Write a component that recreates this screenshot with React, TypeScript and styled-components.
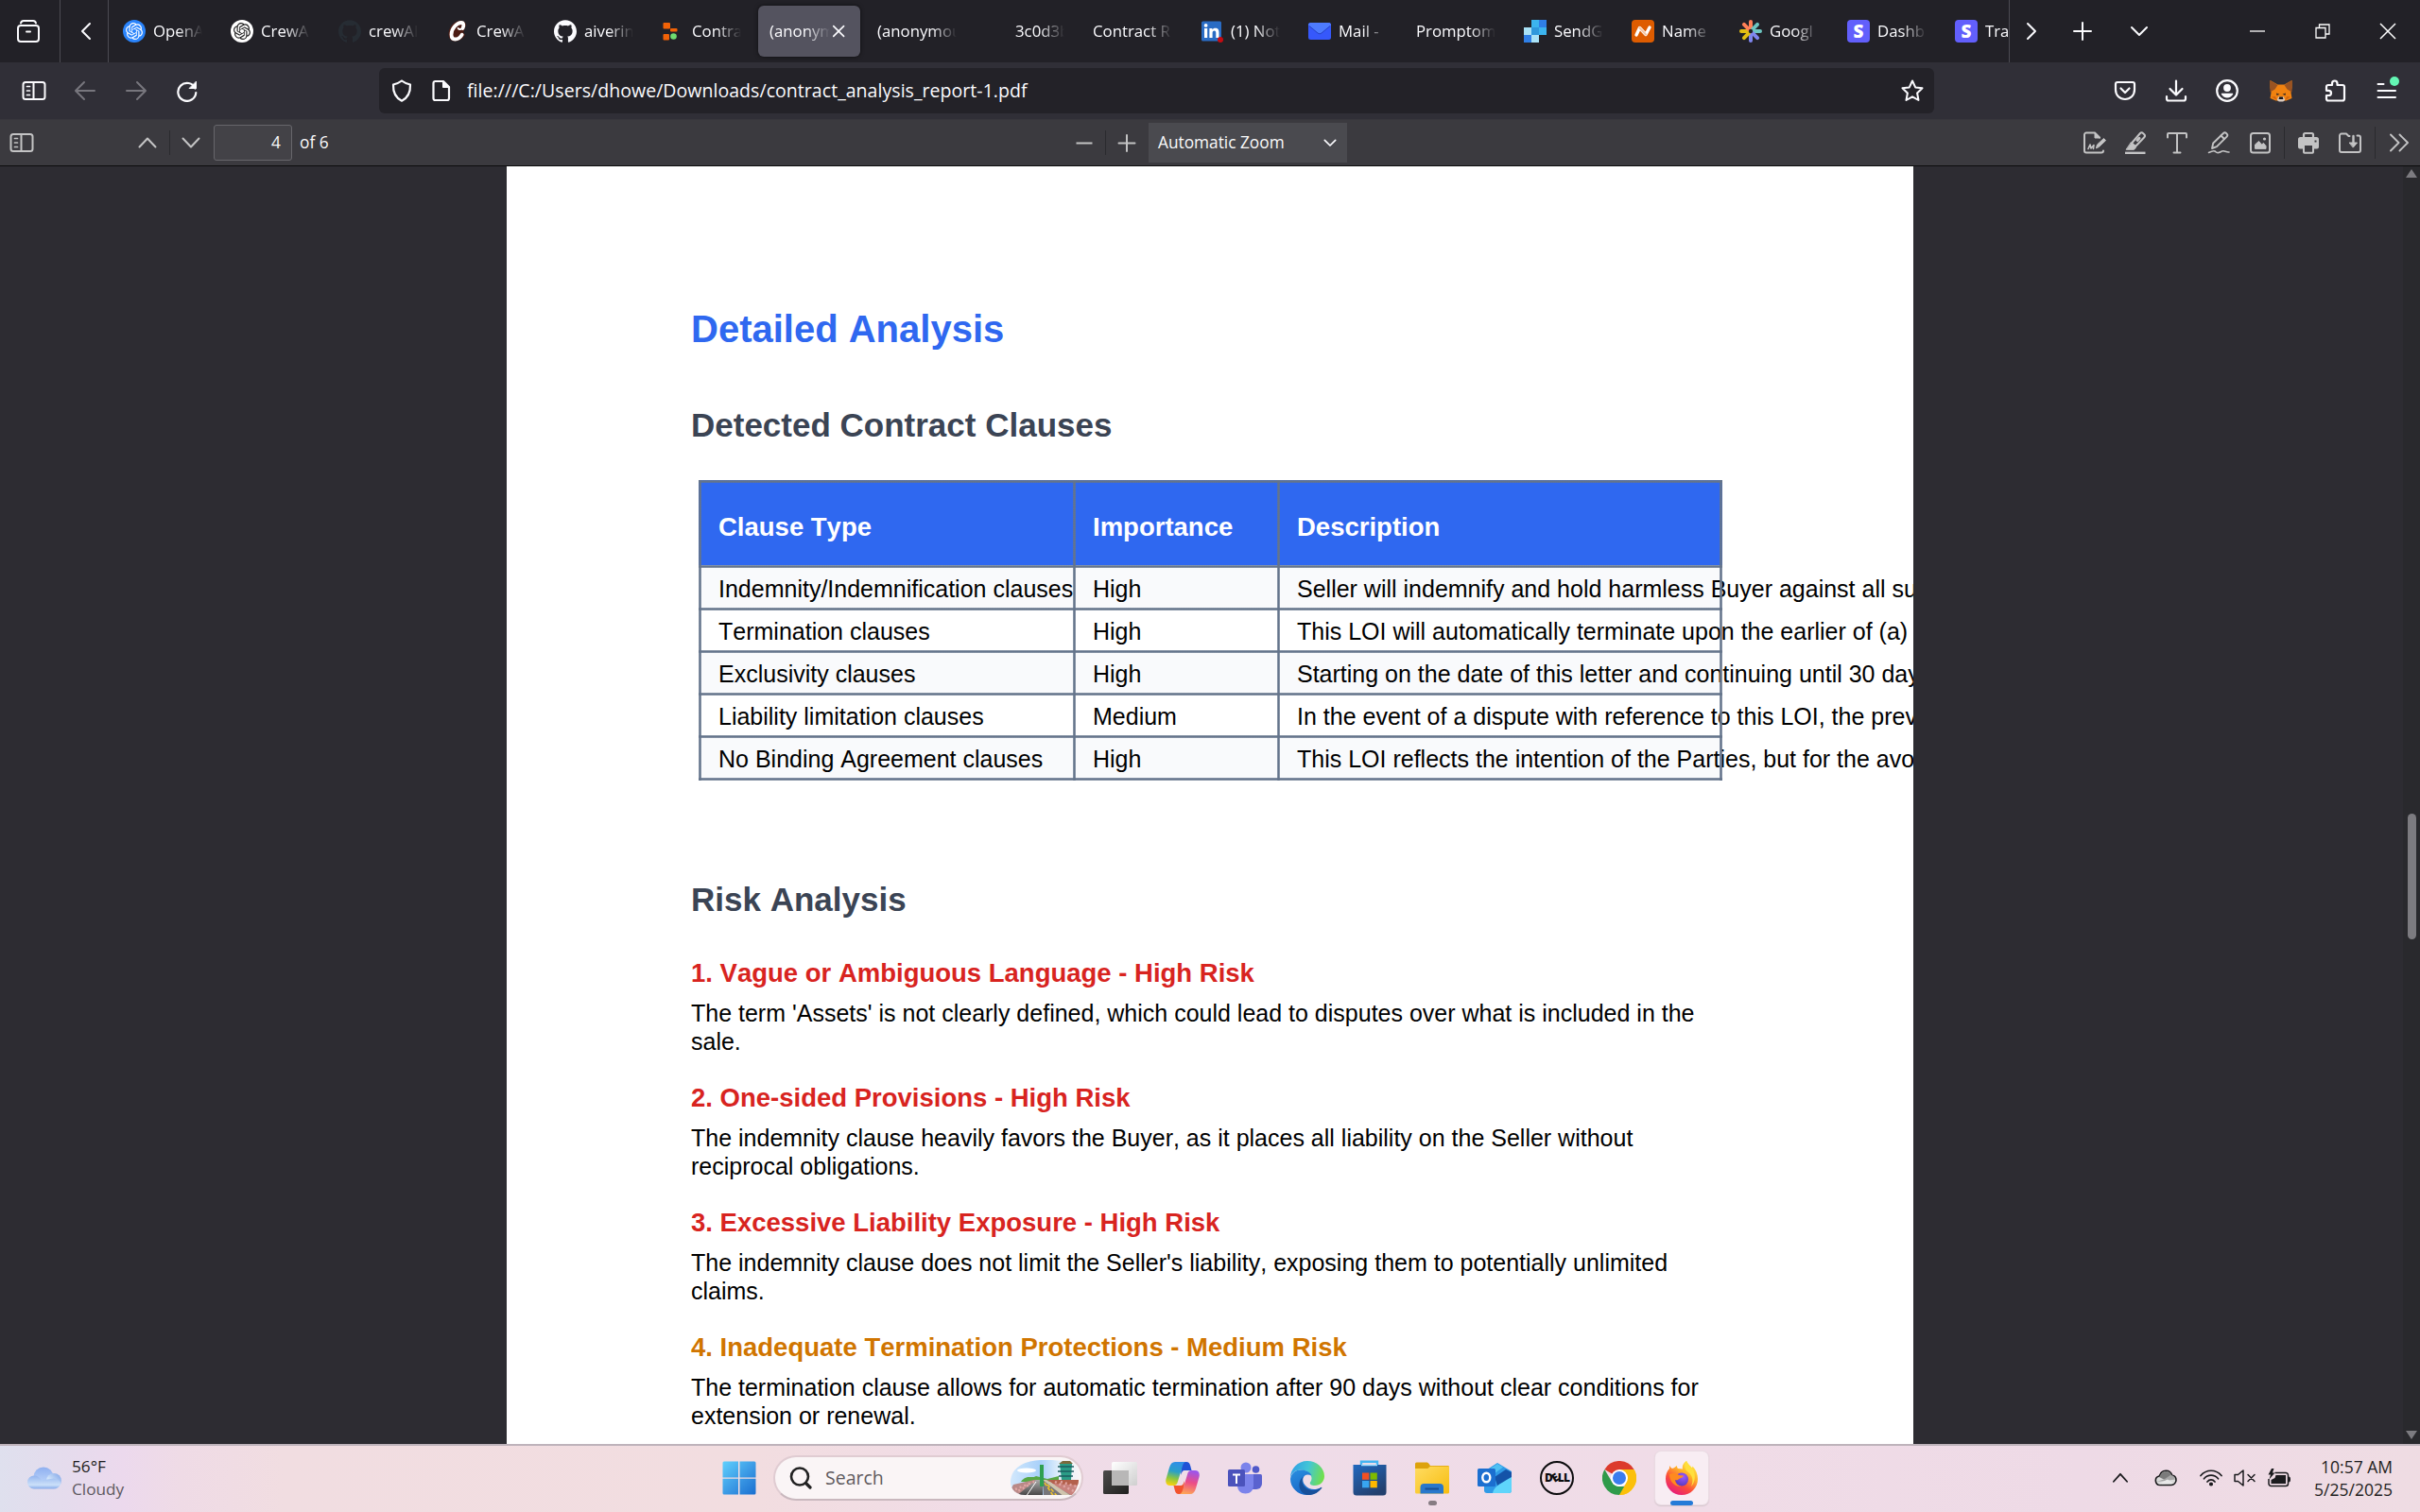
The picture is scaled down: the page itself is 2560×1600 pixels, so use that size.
import React from "react";
import styled, { createGlobalStyle, css } from "styled-components";
import { SiOpenai, SiGithub } from "react-icons/si";

const UI = `"Open Sans", "Noto Sans", sans-serif`;
const DOC = `"Liberation Sans", Arial, sans-serif`;

const Global = createGlobalStyle`
  *, *::before, *::after { box-sizing: border-box; }
  html, body { margin: 0; padding: 0; background: #2d2c32; overflow: hidden; }
  svg { display: block; flex: none; }
`;

const Screen = styled.div`
  width: 2560px;
  height: 1600px;
  display: flex;
  flex-direction: column;
  overflow: hidden;
  font-family: ${UI};
`;

/* ---------- shared ---------- */

const Bar = styled.div<{ $h: number; $bg: string }>`
  flex: none;
  height: ${(p) => p.$h}px;
  background: ${(p) => p.$bg};
  display: flex;
  align-items: center;
`;

const Slot = styled.span<{ $w?: number; $ml?: number; $c?: string }>`
  flex: none;
  width: ${(p) => p.$w ?? 24}px;
  margin-left: ${(p) => p.$ml ?? 0}px;
  color: ${(p) => p.$c ?? "#fbfbfe"};
  display: flex;
  align-items: center;
  justify-content: center;
`;

const Rule = styled.span<{ $h: number; $ml?: number; $c?: string }>`
  flex: none;
  width: 1px;
  height: ${(p) => p.$h}px;
  margin-left: ${(p) => p.$ml ?? 0}px;
  background: ${(p) => p.$c ?? "#2a2a2e"};
`;

const Spacer = styled.span`
  flex: 1;
`;

type GlyphProps = { s?: number; w?: number; children: React.ReactNode };
const Line = ({ s = 24, w = 2, children }: GlyphProps) => (
  <svg width={s} height={s} viewBox="0 0 24 24" fill="none" stroke="currentColor" strokeWidth={w} strokeLinecap="round" strokeLinejoin="round">
    {children}
  </svg>
);

/* ---------- tab strip ---------- */

const TabList = styled.div`
  width: 2010px;
  flex: none;
  height: 66px;
  padding-left: 3px;
  display: flex;
  align-items: center;
  gap: 6px;
  overflow: hidden;
`;

const TabBox = styled.div<{ $active?: boolean }>`
  flex: none;
  width: 108px;
  height: 54px;
  padding: 0 12px;
  border-radius: 6px;
  display: flex;
  align-items: center;
  gap: 8px;
  ${(p) =>
    p.$active &&
    css`
      background: #54535f;
      box-shadow: 0 0 4px rgba(0, 0, 0, 0.6);
      gap: 0;
    `}
`;

const TabText = styled.span`
  flex: 1;
  min-width: 0;
  overflow: hidden;
  white-space: nowrap;
  font-size: 16.8px;
  line-height: 26px;
  color: #fbfbfe;
  -webkit-mask-image: linear-gradient(90deg, #000 calc(100% - 26px), transparent);
  mask-image: linear-gradient(90deg, #000 calc(100% - 26px), transparent);
`;

const Disc = styled.span<{ $bg: string; $c: string }>`
  width: 24px;
  height: 24px;
  border-radius: 50%;
  display: flex;
  align-items: center;
  justify-content: center;
  background: ${(p) => p.$bg};
  color: ${(p) => p.$c};
`;

const Tile = styled.span<{ $bg: string; $s?: number; $r?: number }>`
  width: ${(p) => p.$s ?? 24}px;
  height: ${(p) => p.$s ?? 24}px;
  border-radius: ${(p) => p.$r ?? 4}px;
  display: flex;
  align-items: center;
  justify-content: center;
  background: ${(p) => p.$bg};
  color: #fff;
  font: 800 19px/22px ${UI};
`;

const Crew = () => (
  <svg width="24" height="24" viewBox="0 0 24 24">
    <path d="M13 1C6 3 2 10 2.500 16c.5 5 4 7 8 6.500 5-.6 9-4 9.500-7l-2-2 3-8C21 2 17 0 13 1z" fill="#4c1c14" />
    <path d="M17.500 9c1.500-3 1-6-1.500-6C11 3 5.500 9.500 5.500 15.500c0 3.200 1.600 5 4 5 3 0 5.500-2 7.200-4.800" fill="none" stroke="#fff" strokeWidth="3.800" strokeLinecap="round" />
    <path d="M15.500 9.800c-1.300.4-2.400.2-2.800-.8" fill="none" stroke="#fff" strokeWidth="2" strokeLinecap="round" />
  </svg>
);

const Replit = () => (
  <svg width="24" height="24" viewBox="0 0 24 24">
    <rect x="1.500" y="3" width="7.500" height="6.500" rx="1" fill="#f26207" />
    <rect x="9" y="9" width="7.500" height="3.600" rx="1" fill="#f26207" />
    <rect x="1.500" y="15" width="6.500" height="6.500" rx="1" fill="#f26207" />
    <circle cx="12.500" cy="17.500" r="3.300" fill="#6fdc6f" />
  </svg>
);

const LinkedIn = () => (
  <svg width="24" height="24" viewBox="0 0 24 24">
    <rect x="1" y="1.500" width="21" height="21" rx="1.500" fill="#2a6cc4" />
    <g fill="#fff">
      <rect x="4" y="9" width="3.200" height="10" />
      <circle cx="5.600" cy="5.900" r="1.900" />
      <path d="M9.400 9h3v1.400c.6-1 1.700-1.700 3.200-1.700 3 0 3.900 1.900 3.900 4.700V19h-3.200v-5c0-1.400-.3-2.500-1.700-2.500-1.500 0-2 1.100-2 2.500v5H9.400z" />
    </g>
    <circle cx="21" cy="21" r="3" fill="#c50b12" />
  </svg>
);

const MailIcon = () => (
  <svg width="24" height="24" viewBox="0 0 24 24">
    <rect x="0" y="3" width="24" height="18" rx="2.500" fill="#3658fb" />
    <path d="M0 5.500A2.500 2.500 0 0 1 2.500 3h19A2.500 2.500 0 0 1 24 5.500L14 14c-1.300 1-2.700 1-4 0z" fill="#4d7bff" />
    <path d="M1 6.500l9 7.500c1.300 1 2.700 1 4 0l9-7.500" fill="none" stroke="#2542c8" strokeWidth="1" />
  </svg>
);

const SendGrid = () => (
  <svg width="24" height="24" viewBox="0 0 24 24">
    <path d="M8 0h8v8H8z" fill="#3cb4ee" />
    <path d="M16 0h8v8h-8z" fill="#2f7fe6" />
    <path d="M0 8h8v8H0z" fill="#a9e2f7" />
    <path d="M8 8h8v8H8z" fill="#2f98dc" />
    <path d="M16 8h8v8h-8z" fill="#3cb4ee" />
    <path d="M0 16h8v8H0z" fill="#2f7fe6" />
    <path d="M8 16h8v8H8z" fill="#a9e2f7" />
  </svg>
);

const NameCheap = () => (
  <Tile $bg="#de5c00">
    <svg width="20" height="14" viewBox="0 0 20 14" fill="none" strokeLinecap="round" strokeLinejoin="round">
      <path d="M3 11L6.500 3.500l6.500 7L17 3" stroke="#fff" strokeWidth="3.400" />
      <path d="M6.500 3.500l6.500 7" stroke="#f3c7a6" strokeWidth="2.200" />
    </svg>
  </Tile>
);

const Petals = () => (
  <svg width="24" height="24" viewBox="0 0 24 24">
    {["#ff8057", "#6cc5c0", "#6cc5c0", "#7f86ee", "#7f86ee", "#e3bd13", "#e3bd13", "#ff8057"].map((c, i) => (
      <rect key={i} x="10" y="0" width="4" height="11" rx="2" fill={c} transform={`rotate(${i * 45} 12 12)`} />
    ))}
    <circle cx="12" cy="12" r="2.200" fill="#222" />
  </svg>
);

type TabSpec = { title: string; icon?: React.ReactNode; active?: boolean };
const stripe = <Tile $bg="#625ffc">S</Tile>;
const TABS: TabSpec[] = [
  { title: "OpenAI", icon: <Disc $bg="#2a84fb" $c="#fff"><SiOpenai size={18} /></Disc> },
  { title: "CrewAI", icon: <Disc $bg="#fff" $c="#222"><SiOpenai size={18} /></Disc> },
  { title: "crewAI", icon: <Slot $c="#262c33"><SiGithub size={24} /></Slot> },
  { title: "CrewAI", icon: <Crew /> },
  { title: "aiverin", icon: <Slot><SiGithub size={24} /></Slot> },
  { title: "Contra", icon: <Replit /> },
  { title: "(anonym", active: true },
  { title: "(anonymou" },
  { title: "3c0d3b", icon: <Slot /> },
  { title: "Contract R" },
  { title: "(1) Not", icon: <LinkedIn /> },
  { title: "Mail -", icon: <MailIcon /> },
  { title: "Promptom" },
  { title: "SendG", icon: <SendGrid /> },
  { title: "Name", icon: <NameCheap /> },
  { title: "Googl", icon: <Petals /> },
  { title: "Dashb", icon: stripe },
  { title: "Tra", icon: stripe },
];

const TabStrip = () => (
  <Bar $h={66} $bg="#222127">
    <Slot $ml={17} $w={26}>
      <svg width="26" height="26" viewBox="0 0 26 26" fill="none" stroke="currentColor" strokeWidth="2" strokeLinecap="round">
        <path d="M5 4.500C5.500 2.600 6.500 2 8 2h10c1.500 0 2.500.6 3 2.500" />
        <rect x="2" y="7" width="22" height="17" rx="3" />
        <path d="M11 13.500h4" />
      </svg>
    </Slot>
    <Rule $h={66} $ml={20} $c="#4c4b52" />
    <Slot $ml={15} $w={24}>
      <Line><path d="M16 4l-8 8 8 8" /></Line>
    </Slot>
    <Rule $h={66} $ml={11} $c="#4c4b52" />
    <TabList>
      {TABS.map((t, i) => (
        <TabBox key={i} $active={t.active}>
          {t.icon}
          <TabText>{t.title}</TabText>
          {t.active && (
            <Slot $w={20}>
              <Line s={20}><path d="M4.500 5.500l13 13M17.500 5.500l-13 13" /></Line>
            </Slot>
          )}
        </TabBox>
      ))}
    </TabList>
    <Rule $h={66} $c="#4c4b52" />
    <Slot $ml={11}><Line><path d="M8 4l8 8-8 8" /></Line></Slot>
    <Slot $ml={30}><Line><path d="M12 3v18M3 12h18" /></Line></Slot>
    <Slot $ml={36}><Line><path d="M4 8l8 8 8-8" /></Line></Slot>
    <Spacer />
    <Slot $w={16}>
      <svg width="16" height="2" viewBox="0 0 16 2"><path d="M0 1h16" stroke="#fff" strokeWidth="1.300" /></svg>
    </Slot>
    <Slot $ml={53} $w={16}>
      <svg width="16" height="16" viewBox="0 0 16 16" fill="none" stroke="#fff" strokeWidth="1.300">
        <path d="M1 4.500h10V15H1zM4.500 4V1H15v10h-3.500" />
      </svg>
    </Slot>
    <Slot $ml={52} $w={18}>
      <svg width="18" height="18" viewBox="0 0 18 18"><path d="M1 1l16 16M17 1L1 17" stroke="#fff" strokeWidth="1.500" /></svg>
    </Slot>
    <Slot $w={25} />
  </Bar>
);

/* ---------- navigation bar ---------- */

const UrlBox = styled.div`
  flex: none;
  margin-left: 191px;
  width: 1645px;
  height: 48px;
  border-radius: 6px;
  background: #232228;
  display: flex;
  align-items: center;
`;

const UrlText = styled.span`
  margin-left: 15px;
  flex: 1;
  white-space: nowrap;
  font-size: 19.500px;
  letter-spacing: 0.050px;
  line-height: 28px;
  color: #fbfbfe;
`;

const SidebarGlyph = () => (
  <svg width="26" height="22" viewBox="0 0 26 22" fill="none" stroke="currentColor" strokeWidth="2" strokeLinecap="round">
    <rect x="1.500" y="2" width="23" height="18" rx="2.500" />
    <path d="M12.500 2v18" />
    <path d="M5.500 6.500h3M5.500 11h3M5.500 15.500h3" strokeWidth="1.700" />
  </svg>
);

const Fox = () => (
  <svg width="26" height="24" viewBox="0 0 26 24">
    <path d="M1.500 1l8 4.500h7l8-4.500v8l-1 5 1 6-6 2.500H7.500L1.500 20l1-6-1-5z" fill="#f08210" />
    <path d="M1.500 1l8 5L6.500 10.500l-5 3v-5zM24.500 1l-8 5 3 4.500 5 3v-5z" fill="#9a5322" />
    <path d="M8 14.500l3.500 1.200L8.500 17zM18 14.500l-3.500 1.200L17.500 17z" fill="#3a2a22" />
    <path d="M3 18.500l4-.5 1.500 4zM23 18.500l-4-.5-1.500 4z" fill="#d06410" />
    <path d="M10 18.500h6l1.200 3.500-2 1.500h-4.400l-2-1.500z" fill="#d9c9bd" />
    <path d="M11.200 18.500h3.600l.6 2.500h-4.800z" fill="#16171c" />
  </svg>
);

const MenuWrap = styled.span`
  position: relative;
  width: 24px;
  height: 24px;
  margin-left: 31px;
  margin-right: 23px;
  flex: none;
  color: #fbfbfe;
`;
const Badge = styled.span`
  position: absolute;
  top: -3px;
  right: -1px;
  width: 10px;
  height: 10px;
  border-radius: 50%;
  background: #63f6b4;
`;

const NavBar = () => (
  <Bar $h={60} $bg="#302f37">
    <Slot $ml={23} $w={26}><SidebarGlyph /></Slot>
    <Slot $ml={29} $c="#77767d"><Line><path d="M22 12H2.500M11 3l-9 9 9 9" /></Line></Slot>
    <Slot $ml={30} $c="#77767d"><Line><path d="M2 12h19.500M13 3l9 9-9 9" /></Line></Slot>
    <Slot $ml={29} $w={25}>
      <Line w={2.2}>
        <path d="M20.500 9.500A9.500 9.500 0 1 0 21.300 14" />
        <path d="M21.500 2.500v7h-7z" fill="currentColor" strokeWidth="1" />
      </Line>
    </Slot>
    <UrlBox>
      <Slot $ml={12}>
        <Line w={2.200}><path d="M12 1.500c2.500 2 5 3 9 4 .3 8-2.600 14-9 17.200C5.600 19.500 2.700 13.500 3 5.500c4-1 6.500-2 9-4z" /></Line>
      </Slot>
      <Slot $ml={18}>
        <Line w={2.200}>
          <path d="M5.500 2H14l6 6v12a2 2 0 0 1-2 2H5.500a2 2 0 0 1-2-2V4a2 2 0 0 1 2-2z" />
          <path d="M13.500 2v6.500H20z" fill="currentColor" strokeWidth="1" />
        </Line>
      </Slot>
      <UrlText>file:///C:/Users/dhowe/Downloads/contract_analysis_report-1.pdf</UrlText>
      <Slot>
        <Line><path d="M12 1.500l3.200 6.900 7.300.9-5.400 5.200 1.400 7.500L12 18.300 5.500 22l1.400-7.500L1.500 9.300l7.300-.9z" /></Line>
      </Slot>
      <Slot $w={11} />
    </UrlBox>
    <Spacer />
    <Slot>
      <Line w={2.200}>
        <path d="M4 3h16a2 2 0 0 1 2 2v6c0 6-4.500 10-10 10S2 17 2 11V5a2 2 0 0 1 2-2z" />
        <path d="M7.500 9.500L12 14l4.500-4.500" />
      </Line>
    </Slot>
    <Slot $ml={30}>
      <Line w={2.200}><path d="M12 1.500v14.500M5.500 10l6.500 6.500 6.500-6.500M2 18v2.500a2 2 0 0 0 2 2h16a2 2 0 0 0 2-2V18" /></Line>
    </Slot>
    <Slot $ml={30}>
      <svg width="24" height="24" viewBox="0 0 24 24" fill="currentColor">
        <circle cx="12" cy="12" r="10.800" fill="none" stroke="currentColor" strokeWidth="2.200" />
        <circle cx="12" cy="9" r="3.900" />
        <path d="M6.500 14.800h11c.6 0 .8.4.6.9-1.200 2.400-3.500 3.800-6.100 3.800s-4.900-1.400-6.100-3.800c-.2-.5 0-.9.6-.9z" />
      </svg>
    </Slot>
    <Slot $ml={32} $w={26}><Fox /></Slot>
    <Slot $ml={32}>
      <Line w={2.200}><path d="M9 6V4.300C9 2.600 10.200 1.500 11.800 1.500s2.700 1.100 2.700 2.800V6H20a2 2 0 0 1 2 2v12.500a2 2 0 0 1-2 2H5a2 2 0 0 1-2-2V17h2.300c1.700 0 2.700-1.100 2.700-2.600s-1-2.600-2.700-2.600H3V8a2 2 0 0 1 2-2z" /></Line>
    </Slot>
    <MenuWrap>
      <Line><path d="M2.500 5h6M2.500 12h18.500M2.500 19h18.500" /></Line>
      <Badge />
    </MenuWrap>
  </Bar>
);

/* ---------- PDF viewer toolbar ---------- */

const ToolText = styled.span<{ $ml?: number }>`
  margin-left: ${(p) => p.$ml ?? 0}px;
  font-size: 17.300px;
  line-height: 24px;
  white-space: nowrap;
  color: #f9f9fa;
`;

const PageInput = styled.span`
  flex: none;
  margin-left: 12px;
  width: 83px;
  height: 38px;
  padding-right: 11px;
  border: 1px solid #67666b;
  border-radius: 3px;
  background: #434247;
  display: flex;
  align-items: center;
  justify-content: flex-end;
`;

const ZoomSelect = styled.span`
  flex: none;
  margin-left: 11px;
  width: 210px;
  height: 42px;
  padding: 0 10px;
  background: #4a4a4f;
  color: #fbfbfe;
  display: flex;
  align-items: center;
  justify-content: space-between;
`;

const ToolbarBar = styled(Bar)`
  border-bottom: 1px solid #0c0c0d;
  border-top: 1px solid #38373d;
`;

const G = "#c3c3c4";
const ViewerBar = () => (
  <ToolbarBar $h={50} $bg="#3b3a3f">
    <Slot $ml={10} $w={26} $c={G}><SidebarGlyph /></Slot>
    <Slot $ml={108} $c={G}><Line><path d="M3.500 16.500l8.500-9 8.500 9" /></Line></Slot>
    <Rule $h={26} $ml={11} />
    <Slot $ml={10} $c={G}><Line><path d="M3.500 7.500l8.500 9 8.500-9" /></Line></Slot>
    <PageInput><ToolText>4</ToolText></PageInput>
    <ToolText $ml={8}>of 6</ToolText>
    <Spacer />
    <Slot $c={G}><Line><path d="M3.500 12.500h17" strokeLinecap="butt" /></Line></Slot>
    <Rule $h={26} $ml={10} />
    <Slot $ml={10} $c={G}><Line><path d="M3.500 12.500h17M12 4v17" /></Line></Slot>
    <ZoomSelect>
      <ToolText>Automatic Zoom</ToolText>
      <Line s={16} w={2.600}><path d="M3.500 8l8.500 8.500L20.500 8" /></Line>
    </ZoomSelect>
    <Slot $ml={779} $c={G}>
      <Line w={2}>
        <path d="M21 20.500a2 2 0 0 1-2 2H3a2 2 0 0 1-2-2v-17a2 2 0 0 1 2-2h9l5 5" />
        <path d="M12 1.500V7h5.500z" fill="currentColor" strokeWidth="1" />
        <path d="M13.500 17.500l1-3.500 7-6.500 2 2.200-7 6.600z" fill="currentColor" strokeWidth="1" />
        <path d="M5 18.500l2-4.500 1 4 3-3.500-.5 4" strokeWidth="1.600" />
      </Line>
    </Slot>
    <Slot $ml={19} $c={G}>
      <Line w={2}>
        <path d="M1 23h21.500" strokeWidth="2.800" strokeLinecap="butt" />
        <path d="M8 12.500l9-10.500c1-1 2-1 3 0l1.300 1.200c1 1 1 2 0 3L12 16z" />
        <path d="M7.500 12l5 5-2 2.300H2.500z" fill="currentColor" strokeWidth="1" />
        <path d="M14 9.500l2-2.200" strokeWidth="3" />
      </Line>
    </Slot>
    <Slot $ml={20} $c={G}>
      <Line w={2}><path d="M2 6.500V3a1 1 0 0 1 1-1h18a1 1 0 0 1 1 1v3.500M12 2v20.500M8.500 22.500h7" /></Line>
    </Slot>
    <Slot $ml={20} $c={G}>
      <Line w={1.900}>
        <path d="M5 18l1.200-5.500L17 2c1-1 2-1 3 0l.6.6c1 1 1 2 0 3L10 16.200z" />
        <path d="M14.500 4.500l3.500 3.500" />
        <path d="M1.500 22.500c3-1.500 5-2.500 6.500-1.500s1.500 2 4 1.500 3-2 5-1.800 3 1.500 6 1.300" strokeWidth="1.600" />
      </Line>
    </Slot>
    <Slot $ml={20} $c={G}>
      <Line w={2}>
        <rect x="2" y="2" width="20" height="20.500" rx="2.500" />
        <path d="M6.500 18v-4l4-3.500 3 3.500 2-1.500 2.500 3V18z" fill="currentColor" strokeWidth="1" />
        <circle cx="16.500" cy="8" r="1.600" fill="currentColor" strokeWidth="0" />
      </Line>
    </Slot>
    <Rule $h={34} $ml={13} />
    <Slot $ml={13} $c={G}>
      <svg width="24" height="24" viewBox="0 0 24 24" fill="currentColor">
        <path d="M7 6V3.500C7 2.500 7.800 2 8.500 2h7c.8 0 1.500.5 1.500 1.500V6" fill="none" stroke="currentColor" strokeWidth="2.200" />
        <path fillRule="evenodd" d="M3.500 6h17A2.500 2.500 0 0 1 23 8.500v8a2 2 0 0 1-2 2h-3V22a1.800 1.800 0 0 1-1.800 1.800H7.800A1.800 1.800 0 0 1 6 22v-3.500H3a2 2 0 0 1-2-2v-8A2.500 2.500 0 0 1 3.500 6zM8 15v6.700h8V15zM18.500 9.500v2h2v-2z" />
      </svg>
    </Slot>
    <Slot $ml={20} $c={G}>
      <Line w={2}>
        <path d="M19.500 4.500h1.500a2 2 0 0 1 2 2V20a2 2 0 0 1-2 2H3a2 2 0 0 1-2-2V4.500a2 2 0 0 1 2-2h5l2.500 2.500h1" />
        <path d="M15.500 5v8" strokeWidth="2.400" />
        <path d="M11.500 12h8l-4 4.800z" fill="currentColor" strokeWidth="1" />
      </Line>
    </Slot>
    <Rule $h={34} $ml={14} />
    <Slot $ml={14} $w={22} $c={G}>
      <Line w={1.900}><path d="M3 3.500l8.500 8.500L3 20.500M12.500 3.500L21 12l-8.500 8.500" /></Line>
    </Slot>
    <Slot $w={11} />
  </ToolbarBar>
);

/* ---------- document ---------- */

const Viewer = styled.div`
  flex: none;
  height: 1352px;
  background: #2d2c32;
  display: flex;
  overflow: hidden;
`;

const Page = styled.div`
  flex: none;
  margin-left: 536px;
  width: 1488px;
  height: 1352px;
  padding: 147px 0 0 195px;
  background: #fff;
  overflow: hidden;
  font-family: ${DOC};
  font-kerning: none;
  color: #000;
`;

const Title = styled.h1`
  margin: 0 0 55px;
  font-size: 40px;
  line-height: 50px;
  color: #2f68f0;
`;

const Section = styled.h2`
  margin: 0;
  font-size: 35px;
  line-height: 44px;
  color: #3b4454;
`;

const hair = "rgba(100,116,139,0.78)";
const vLine = `linear-gradient(90deg, ${hair} 1px, #64748b 1px 2px, ${hair} 2px)`;
const hLine = `linear-gradient(180deg, ${hair} 1px, #64748b 1px 2px, ${hair} 2px)`;

const Table = styled.div`
  position: relative;
  margin: 36px 0 104px 8px;
  width: 1083px;
  height: 318px;
  display: grid;
  grid-template-columns: 396px 216px 471px;
  grid-template-rows: 90px repeat(4, 45px) 48px;
  &::after {
    content: "";
    position: absolute;
    inset: 0;
    background: ${vLine} right / 3px 100% no-repeat, ${hLine} bottom / 100% 3px no-repeat;
  }
`;

const Cell = styled.div<{ $tone: string; $head?: boolean }>`
  position: relative;
  padding: ${(p) => (p.$head ? "34px" : "9px")} 0 0 21px;
  background: ${(p) => p.$tone};
  white-space: nowrap;
  font-size: ${(p) => (p.$head ? 27.5 : 25)}px;
  line-height: 32px;
  font-weight: ${(p) => (p.$head ? 700 : 400)};
  color: ${(p) => (p.$head ? "#fff" : "#000")};
  &::after {
    content: "";
    position: absolute;
    inset: 0;
    background: ${vLine} left / 3px 100% no-repeat, ${hLine} top / 100% 3px no-repeat;
  }
`;

const RiskTitle = styled.h3<{ $c: string }>`
  margin: 0 0 10px;
  font-size: 27.500px;
  line-height: 35px;
  color: ${(p) => p.$c};
`;

const RiskText = styled.p`
  margin: 0 0 27px;
  font-size: 25px;
  line-height: 30px;
  white-space: pre-line;
`;

const RiskList = styled.div`
  margin-top: 38px;
`;

const ROWS = [
  ["Indemnity/Indemnification clauses", "High", "Seller will indemnify and hold harmless Buyer against all suits"],
  ["Termination clauses", "High", "This LOI will automatically terminate upon the earlier of (a)"],
  ["Exclusivity clauses", "High", "Starting on the date of this letter and continuing until 30 days"],
  ["Liability limitation clauses", "Medium", "In the event of a dispute with reference to this LOI, the prevailing"],
  ["No Binding Agreement clauses", "High", "This LOI reflects the intention of the Parties, but for the avoidance"],
];

const RISKS = [
  { c: "#d8241f", t: "1. Vague or Ambiguous Language - High Risk", d: "The term 'Assets' is not clearly defined, which could lead to disputes over what is included in the\nsale." },
  { c: "#d8241f", t: "2. One-sided Provisions - High Risk", d: "The indemnity clause heavily favors the Buyer, as it places all liability on the Seller without\nreciprocal obligations." },
  { c: "#d8241f", t: "3. Excessive Liability Exposure - High Risk", d: "The indemnity clause does not limit the Seller's liability, exposing them to potentially unlimited\nclaims." },
  { c: "#d07500", t: "4. Inadequate Termination Protections - Medium Risk", d: "The termination clause allows for automatic termination after 90 days without clear conditions for\nextension or renewal." },
];

const ScrollTrack = styled.div`
  flex: none;
  width: 18px;
  margin-left: auto;
  background: #29292d;
  display: flex;
  flex-direction: column;
  align-items: center;
`;
const Thumb = styled.span`
  width: 9px;
  height: 133px;
  margin-top: 673px;
  border-radius: 5px;
  background: #7c7b80;
`;
const Arrow = styled.span<{ $down?: boolean }>`
  margin-top: ${(p) => (p.$down ? "auto" : "3px")};
  margin-bottom: ${(p) => (p.$down ? "5px" : "0")};
  border: 6px solid transparent;
  ${(p) => (p.$down ? "border-top: 9px solid #7c7b80; border-bottom: 0;" : "border-bottom: 9px solid #7c7b80; border-top: 0;")}
`;

const Document = () => (
  <Viewer>
    <Page>
      <Title>Detailed Analysis</Title>
      <Section>Detected Contract Clauses</Section>
      <Table>
        {["Clause Type", "Importance", "Description"].map((h) => (
          <Cell key={h} $head $tone="#2f68f0">{h}</Cell>
        ))}
        {ROWS.map((r, i) => r.map((v, j) => (
          <Cell key={`${i}-${j}`} $tone={i % 2 ? "#fff" : "#f9fafc"}>{v}</Cell>
        )))}
      </Table>
      <Section>Risk Analysis</Section>
      <RiskList>
        {RISKS.map((r) => (
          <React.Fragment key={r.t}>
            <RiskTitle $c={r.c}>{r.t}</RiskTitle>
            <RiskText>{r.d}</RiskText>
          </React.Fragment>
        ))}
      </RiskList>
    </Page>
    <ScrollTrack>
      <Arrow />
      <Thumb />
      <Arrow $down />
    </ScrollTrack>
  </Viewer>
);

/* ---------- taskbar ---------- */

const Taskbar = styled.div`
  flex: none;
  height: 72px;
  padding-bottom: 2px;
  border-top: 2px solid #beb3bb;
  background: linear-gradient(90deg, #dfe0ee 0, #e4dced 60px, #ecd9ed 130px, #efdbe6 190px, #f1dde1 300px, #f2dde0 800px, #f0dce7 1050px, #efdce8 1300px, #f0dce7 1800px, #eedae6 2200px, #efdce3 2560px);
  display: flex;
  align-items: center;
`;

const TwoLine = styled.span<{ $w: number; $right?: boolean; $ml: number }>`
  flex: none;
  width: ${(p) => p.$w}px;
  margin-left: ${(p) => p.$ml}px;
  display: flex;
  flex-direction: column;
  align-items: ${(p) => (p.$right ? "flex-end" : "flex-start")};
  font-size: ${(p) => (p.$right ? 17.5 : 17.2)}px;
  line-height: 24px;
  white-space: nowrap;
  color: #1f1f22;
`;
const Muted = styled.span`
  color: #5d5960;
`;

const SearchBox = styled.span`
  flex: none;
  width: 328px;
  height: 48px;
  margin-left: 19px;
  padding: 0 0 0 15px;
  border: 2px solid #e0ccd2;
  border-bottom-color: #c9b8be;
  border-radius: 24px;
  background: #faf5f6;
  display: flex;
  align-items: center;
  overflow: hidden;
`;
const SearchText = styled.span`
  margin-left: 14px;
  flex: 1;
  font-size: 19.500px;
  line-height: 26px;
  color: #5f5b5e;
`;

const AppSlot = styled.span`
  position: relative;
  flex: none;
  width: 66px;
  height: 68px;
  display: flex;
  align-items: center;
  justify-content: center;
`;
const ActiveTile = styled.span`
  width: 56px;
  height: 56px;
  border-radius: 6px;
  background: #f8edf3;
  box-shadow: 0 0 0 1px #eadbe3, 0 1px 1px 1px #d5c5cd;
  display: flex;
  align-items: center;
  justify-content: center;
`;
const RunMark = styled.span<{ $w: number; $c: string }>`
  position: absolute;
  left: 50%;
  bottom: 5px;
  width: ${(p) => p.$w}px;
  height: 5px;
  margin-left: ${(p) => -p.$w / 2}px;
  border-radius: 3px;
  background: ${(p) => p.$c};
`;

const CloudWeather = () => (
  <svg width="36" height="24" viewBox="0 0 36 24">
    <defs>
      <linearGradient id="cw1" x1="0" y1="0" x2="0" y2="1"><stop offset="0" stopColor="#8fb0f0" /><stop offset="1" stopColor="#c6dcfb" /></linearGradient>
      <linearGradient id="cw2" x1="1" y1="0" x2="0" y2="1"><stop offset="0" stopColor="#7ba0e6" /><stop offset="0.600" stopColor="#cfe3f9" /></linearGradient>
      <linearGradient id="cw3" x1="0" y1="0" x2="0" y2="1"><stop offset="0" stopColor="#94b5ef" /><stop offset="0.700" stopColor="#cbe0f9" /><stop offset="1" stopColor="#86aaea" /></linearGradient>
    </defs>
    <circle cx="17" cy="11" r="10.500" fill="url(#cw1)" />
    <circle cx="28" cy="15" r="8" fill="url(#cw2)" />
    <path d="M7 9.500c4 0 6 2 8 5l13-2c4 1 8 3 7 6s-4 5-7 5H7a7 7 0 0 1 0-14z" fill="url(#cw3)" />
  </svg>
);

const Landscape = () => (
  <svg width="78" height="40" viewBox="0 0 78 40">
    <defs>
      <clipPath id="lsc"><path d="M4 18C8 5 25 0 42 1c14 0 25 2 32 6 3 12 1 24-6 31H18C8 38 0 30 4 18z" /></clipPath>
      <linearGradient id="sky" x1="0" y1="0" x2="1" y2="0"><stop offset="0" stopColor="#d6eafc" /><stop offset="0.450" stopColor="#a8d0fa" /><stop offset="0.700" stopColor="#e2effb" /><stop offset="1" stopColor="#faf5f6" /></linearGradient>
      <linearGradient id="road" x1="0" y1="0" x2="0" y2="1"><stop offset="0" stopColor="#aaa" /><stop offset="1" stopColor="#3c3c3c" /></linearGradient>
    </defs>
    <g clipPath="url(#lsc)">
      <rect width="78" height="40" fill="url(#sky)" />
      <ellipse cx="20" cy="12" rx="10" ry="2.500" fill="#fff" />
      <path d="M14 24c6-8 12-3 16-6l12 3 12-3v6z" fill="#57a845" />
      <path d="M0 38l6-11 22-5h4L14 38z" fill="#b98987" />
      <path d="M42 22h36v18H66z" fill="#c8827d" />
      <path d="M42 22h36v6l-30-2z" fill="#b3604c" />
      <path d="M8 40l22-18h7v18z" fill="url(#road)" />
      <path d="M37 22l1 18h32L41 23z" fill="#77767a" />
      <path d="M37 22h4l28 18h-9z" fill="#cfc5ae" />
      <path d="M39 25l10 15M42 27l11 13" stroke="#f0c52c" strokeWidth="1.500" strokeDasharray="4 2" />
      <path d="M30 24l-11 16" stroke="#fff" strokeWidth="1" />
      <g stroke="#e0a6a4" strokeWidth="2.500" strokeDasharray="2 3"><path d="M8 32l20-8M7 36l16-9M50 24l24 12M56 24l20 6" /></g>
    </g>
    <rect x="34" y="6" width="4" height="23" fill="#2fa050" />
    <path d="M55 5h13l-1 17H57z" fill="#2a9c86" />
    <path d="M53 8h17M53 13h17M54 18h15" stroke="#1d5c60" strokeWidth="1.600" />
    <path d="M54 5l4-3h8l3 3z" fill="#7b6a3d" />
  </svg>
);

const Start = () => (
  <svg width="36" height="36" viewBox="0 0 36 36">
    <defs><linearGradient id="st" x1="0" y1="0" x2="1" y2="1"><stop offset="0" stopColor="#5fd0fd" /><stop offset="0.550" stopColor="#3a98e4" /><stop offset="1" stopColor="#1a6fd0" /></linearGradient></defs>
    <path fill="url(#st)" d="M2 .5h15v17H.5V2A1.500 1.500 0 0 1 2 .5zM18.500.5H34A1.500 1.500 0 0 1 35.500 2v15.500h-17zM.5 18.700h16.500v16.800H2A1.500 1.500 0 0 1 .5 34zM18.500 18.700h17V34a1.500 1.500 0 0 1-1.500 1.500H18.500z" />
  </svg>
);

const TaskView = () => (
  <svg width="36" height="36" viewBox="0 0 36 36">
    <defs>
      <linearGradient id="tv1" x1="0" y1="0" x2="1" y2="1"><stop offset="0" stopColor="#4c4b4a" /><stop offset="1" stopColor="#20201f" /></linearGradient>
      <linearGradient id="tv2" x1="0" y1="0" x2="1" y2="1"><stop offset="0" stopColor="#fff" /><stop offset="1" stopColor="#cfcfcf" /></linearGradient>
    </defs>
    <rect x="0" y="10" width="27" height="25" rx="1.500" fill="url(#tv1)" />
    <rect x="9" y="1" width="27" height="25" rx="1.500" fill="url(#tv2)" />
    <rect x="9" y="10" width="18" height="16" fill="#b8b7b7" />
  </svg>
);

const Copilot = () => (
  <svg width="36" height="36" viewBox="0 0 36 36">
    <defs>
      <linearGradient id="cp1" x1="0.500" y1="0" x2="0.300" y2="1"><stop offset="0" stopColor="#2f8fe8" /><stop offset="0.400" stopColor="#2aa0c8" /><stop offset="0.700" stopColor="#8cc63f" /><stop offset="1" stopColor="#fbd20c" /></linearGradient>
      <linearGradient id="cp2" x1="0.600" y1="0" x2="0.400" y2="1"><stop offset="0" stopColor="#9a55ee" /><stop offset="0.500" stopColor="#ec4c86" /><stop offset="1" stopColor="#fda557" /></linearGradient>
    </defs>
    <path d="M17 1h5c2.500 0 3.500 1.500 4.200 4L27.500 10H20c-2 0-3 2-4 5z" fill="#1f52d6" />
    <path d="M19 35h-5c-2.500 0-3.500-1.500-4.200-4L8.500 26H16c2 0 3-2 4-5z" fill="#f2532e" />
    <path d="M10 1h12c-2 0-3.200 1.500-4 4l-5 16.500C12 25 11 26 8 26H5C1 26-.5 23 .5 19L4 7C5.200 3 7 1 10 1z" fill="url(#cp1)" />
    <path d="M26 35H14c2 0 3.200-1.500 4-4l5-16.500C24 11 25 10 28 10h3c4 0 5.500 3 4.500 7L32 29c-1.200 4-3 6-6 6z" fill="url(#cp2)" />
  </svg>
);

const Teams = () => (
  <svg width="36" height="36" viewBox="0 0 36 36">
    <circle cx="19" cy="7" r="5.500" fill="#7b83eb" />
    <circle cx="29.500" cy="9" r="3.800" fill="#5059c9" />
    <path d="M24 14h10.500a1.500 1.500 0 0 1 1.500 1.500V24a6 6 0 0 1-6 6h-5z" fill="#5a62cf" />
    <path d="M10 14h17v12c0 5-3.500 8.500-8.500 8.500S10 31 10 26z" fill="#7b83eb" />
    <rect x="0" y="9" width="18" height="18" rx="1.500" fill="#4b53bc" />
    <path d="M5 13.500h8v2h-3V24H8v-8.500H5z" fill="#fff" />
  </svg>
);

const Edge = () => (
  <svg width="36" height="36" viewBox="0 0 36 36">
    <defs>
      <linearGradient id="ed1" x1="0" y1="0.300" x2="1" y2="0.500"><stop offset="0" stopColor="#2f9fe6" /><stop offset="0.500" stopColor="#43c6d6" /><stop offset="1" stopColor="#72e04a" /></linearGradient>
      <linearGradient id="ed2" x1="0" y1="0" x2="0.600" y2="1"><stop offset="0" stopColor="#2a8fe0" /><stop offset="1" stopColor="#1663c4" /></linearGradient>
    </defs>
    <path d="M0 18C0 8 8 0 18 0s18 7.500 18 16c0 6-4.500 10-10 10-4 0-6-1.500-5-3.500 1-1.500 1.500-2.500 1.500-4.500C22 13 17 9.500 11 9.500 5 9.500 1 13 0 18z" fill="url(#ed1)" />
    <path d="M0 19C1 12.500 6 9.500 11 9.500c6 0 10 2.500 11.500 6-8-4-12 4-7 10 4 5 11 6 17 2.500C29 33.500 24 36 18 36 8 36 0 28.500 0 19z" fill="url(#ed2)" />
    <path d="M14 16c-3 4-1.500 12 6 14.500 4.500 1.500 9 .5 12.500-2.500.8-.6 1.200.3.600 1C29 34 24 36.500 18 36c-9-2-12-13-4-20z" fill="#17509a" />
  </svg>
);

const Store = () => (
  <svg width="36" height="38" viewBox="0 0 36 38">
    <defs><linearGradient id="ms" x1="0" y1="0" x2="0.600" y2="1"><stop offset="0" stopColor="#2069bf" /><stop offset="1" stopColor="#23406e" /></linearGradient></defs>
    <path d="M9 8V1.800h17V8" fill="none" stroke="#45b5f2" strokeWidth="2.400" />
    <path d="M.5 5h35v29a3.500 3.500 0 0 1-3.500 3.500H4A3.500 3.500 0 0 1 .5 34z" fill="url(#ms)" />
    <path d="M9 5.500h17" stroke="#9bdcff" strokeWidth="1.500" />
    <path d="M10 13.500h7.300v7.300H10z" fill="#f25022" />
    <path d="M18.500 13.500h7.300v7.300h-7.300z" fill="#7fba00" />
    <path d="M10 22h7.300v7.300H10z" fill="#38a5f0" />
    <path d="M18.500 22h7.300v7.300h-7.300z" fill="#ffb900" />
  </svg>
);

const Explorer = () => (
  <svg width="36" height="34" viewBox="0 0 36 34">
    <defs><linearGradient id="fe" x1="0" y1="0" x2="1" y2="1"><stop offset="0" stopColor="#ffdc62" /><stop offset="1" stopColor="#f7bd0f" /></linearGradient></defs>
    <path d="M0 2A1.500 1.500 0 0 1 1.500.5H12c1 0 2 .5 3 2l1 1.500h18.500A1.500 1.500 0 0 1 36 5v8H0z" fill="#dda20c" />
    <path d="M0 7h12c1.500 0 2-.5 3-1.500L16 4.800h20V32a1.500 1.500 0 0 1-1.500 1.500h-33A1.500 1.500 0 0 1 0 32z" fill="url(#fe)" />
    <path d="M5.500 33.500V27a4 4 0 0 1 4-4H26a4 4 0 0 1 4 4v6.500z" fill="#2878cc" />
    <path d="M10.500 28.500H25" stroke="#174f94" strokeWidth="2" />
  </svg>
);

const Outlook = () => (
  <svg width="36" height="34" viewBox="0 0 36 34">
    <path d="M7 10L21 1l15 9v20a3 3 0 0 1-3 3H10a3 3 0 0 1-3-3z" fill="#2f9ae6" />
    <path d="M18 16L30 8l6 3v6L21 25z" fill="#1453a8" />
    <path d="M12 8l9-6 6 3.500L17 13z" fill="#4fc0f2" />
    <path d="M16 33c1-6 6-9 20-17v14a3 3 0 0 1-3 3z" fill="#5fd5fb" />
    <rect x="0" y="7" width="19" height="19" rx="1.500" fill="#1b6fd0" />
    <ellipse cx="9.300" cy="16.500" rx="4" ry="4.800" fill="none" stroke="#fff" strokeWidth="2.400" />
  </svg>
);

const DellRing = styled.span`
  width: 36px;
  height: 36px;
  border: 2px solid #0c0c0e;
  border-radius: 50%;
  display: flex;
  align-items: center;
  justify-content: center;
  font: 800 12px/12px ${UI};
  letter-spacing: -0.800px;
  color: #0c0c0e;
`;
const TiltedE = styled.span`
  display: inline-block;
  transform: rotate(-32deg);
`;

const Chrome = () => (
  <svg width="36" height="36" viewBox="0 0 36 36">
    <path d="M18 18L2.400 9A18 18 0 0 1 33.600 9z" fill="#dc3b2d" />
    <path d="M18 18V9h15.600A18 18 0 0 1 18 36l8-13.500z" fill="#fbc00a" />
    <path d="M2.400 9l8 13.500C12 26 16 27 18 27h7.800L18 36A18 18 0 0 1 2.400 9z" fill="#2f9a4a" />
    <path d="M25.800 22.500L18 36a18 18 0 0 0 15.600-27H18z" fill="#fbc00a" />
    <circle cx="18" cy="18" r="9" fill="#fff" />
    <circle cx="18" cy="18" r="7" fill="#3b7ded" />
  </svg>
);

const Firefox = () => (
  <svg width="36" height="36" viewBox="0 0 36 36">
    <defs>
      <linearGradient id="ff1" x1="0.800" y1="0" x2="0.200" y2="1"><stop offset="0" stopColor="#fff04a" /><stop offset="0.350" stopColor="#ffb127" /><stop offset="0.650" stopColor="#fb4c3a" /><stop offset="1" stopColor="#e31587" /></linearGradient>
      <radialGradient id="ff2" cx="0.600" cy="0.300" r="0.800"><stop offset="0" stopColor="#9a59ff" /><stop offset="1" stopColor="#5237b8" /></radialGradient>
    </defs>
    <path d="M23 0c1 3 4 5 6 7.500l.5-2C33 9 35 14 35 19c0 9.500-7.500 17-17 17S1 28.500 1 19c0-4 1-8 4-11v-3c1 1.500 2 2.500 3 3 3-1 4-2.500 5-3 0 1 0 2 1 3l5 .5C18 5 20 2 23 0z" fill="url(#ff1)" />
    <path d="M23 0c1 3 4 5 6 7.500C33 13 33 22 28 27c3-7 1-12-3-15s-5-8-2-12z" fill="#ffdf3d" />
    <circle cx="18" cy="19.500" r="7" fill="url(#ff2)" />
    <path d="M5 14c4-2 8-1 10 1l5 .5c-1 3-4 2.500-5.500 4-1 1-2 1-3.500.5 0 3 2.500 6 6.500 6.500C11 28 5 22 5 14z" fill="#ff8a1f" />
  </svg>
);

const Tray = {
  chevron: <Line s={20} w={2.200}><path d="M3.500 16.500L12 7l8.500 9.500" /></Line>,
  cloud: (
    <svg width="24" height="18" viewBox="0 0 24 18">
      <path d="M6 16.500a4.800 4.800 0 0 1-.8-9.500C6.500 3.500 9 1.200 12.200 1.200c3.500 0 5.800 2.200 6.600 5 2.500.3 4.200 2.400 4.200 5s-2.200 5.300-5 5.300z" fill="#d9d9d9" stroke="#19191b" strokeWidth="1.600" />
      <path d="M5.500 7.500C7 4 9.500 2 12.200 2c3 0 5 1.800 5.800 4.500L11 11 5 8z" fill="#7b7b7b" />
      <path d="M2.500 13L11 10l6-4c3 0 4.500 2 5 4.500z" fill="#a5a5a5" />
      <path d="M4 15.500l10-5 7 4.500z" fill="#e9e9e9" />
    </svg>
  ),
  wifi: (
    <svg width="24" height="18" viewBox="0 0 24 18" fill="none" stroke="#1b1b1e" strokeWidth="1.700" strokeLinecap="round">
      <path d="M1 6.500C7-.5 17-.5 23 6.500M4.500 9.800c4-4.800 11-4.800 15 0M8 13c2.200-2.800 5.800-2.800 8 0" />
      <circle cx="12" cy="15.500" r="1.500" fill="#1b1b1e" stroke="none" />
      <circle cx="12" cy="15.500" r="1.200" />
    </svg>
  ),
  volume: (
    <svg width="24" height="18" viewBox="0 0 24 18" fill="none" stroke="#1b1b1e" strokeWidth="1.500" strokeLinejoin="round" strokeLinecap="round">
      <path d="M1 5.500h3.500L10 1v16l-5.500-4.500H1z" />
      <path d="M15 5.500l7 7M22 5.500l-7 7" />
    </svg>
  ),
  battery: (
    <svg width="24" height="20" viewBox="0 0 24 20">
      <path d="M7.500 4.500H19a2.500 2.500 0 0 1 2.500 2.500v9a2.500 2.500 0 0 1-2.500 2.500H3.500A2.500 2.500 0 0 1 1 16v-5" fill="none" stroke="#1b1b1e" strokeWidth="1.500" />
      <path d="M8.500 7H19v9H3.500v-4l4-2z" fill="#1b1b1e" />
      <path d="M22 8.500c1.500 0 2 .8 2 3s-.5 3-2 3z" fill="#1b1b1e" />
      <path d="M4 0L.5 6.500H3L1.500 11.500 7.500 4.500H5L6.500 0z" fill="#1b1b1e" />
    </svg>
  ),
};

const BottomBar = () => (
  <Taskbar>
    <Slot $ml={29} $w={36}><CloudWeather /></Slot>
    <TwoLine $ml={11} $w={180}>
      <span>56°F</span>
      <Muted>Cloudy</Muted>
    </TwoLine>
    <Slot $ml={508} $w={35}><Start /></Slot>
    <SearchBox>
      <svg width="24" height="24" viewBox="0 0 24 24" fill="none" stroke="#222" strokeLinecap="round">
        <circle cx="11" cy="10.500" r="9" strokeWidth="2.600" />
        <path d="M17.500 17.500l4.500 4.500" strokeWidth="3.200" />
      </svg>
      <SearchText>Search</SearchText>
      <Landscape />
    </SearchBox>
    <Slot $w={6} />
    <AppSlot><TaskView /></AppSlot>
    <AppSlot><Copilot /></AppSlot>
    <AppSlot><Teams /></AppSlot>
    <AppSlot><Edge /></AppSlot>
    <AppSlot><Store /></AppSlot>
    <AppSlot><Explorer /><RunMark $w={9} $c="#867c83" /></AppSlot>
    <AppSlot><Outlook /></AppSlot>
    <AppSlot><DellRing>D<TiltedE>E</TiltedE>LL</DellRing></AppSlot>
    <AppSlot><Chrome /></AppSlot>
    <AppSlot><ActiveTile><Firefox /></ActiveTile><RunMark $w={24} $c="#247bd8" /></AppSlot>
    <Spacer />
    <Slot $w={20} $c="#1b1b1e">{Tray.chevron}</Slot>
    <Slot $ml={26}>{Tray.cloud}</Slot>
    <Slot $ml={24}>{Tray.wifi}</Slot>
    <Slot $ml={12}>{Tray.volume}</Slot>
    <Slot $ml={12}>{Tray.battery}</Slot>
    <TwoLine $ml={8} $w={100} $right>
      <span>10:57 AM</span>
      <span>5/25/2025</span>
    </TwoLine>
    <Slot $w={29} />
  </Taskbar>
);

export default function App() {
  return (
    <Screen>
      <Global />
      <TabStrip />
      <NavBar />
      <ViewerBar />
      <Document />
      <BottomBar />
    </Screen>
  );
}
